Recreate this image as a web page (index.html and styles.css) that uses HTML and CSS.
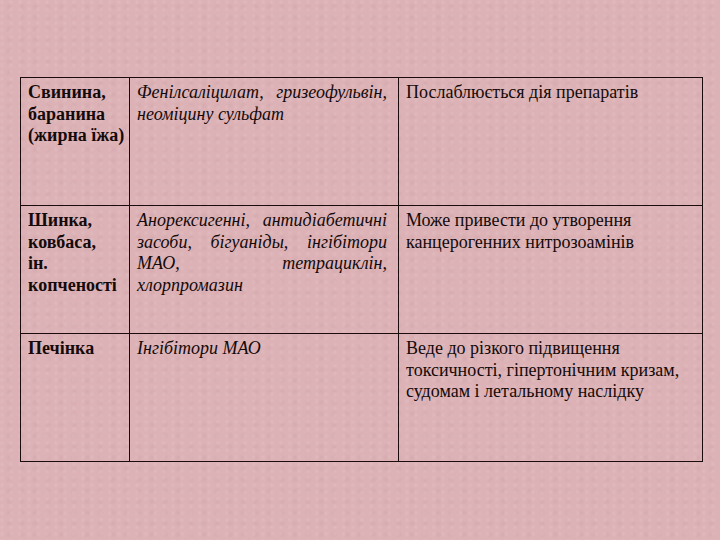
FILE: index.html
```html
<!DOCTYPE html>
<html lang="uk">
<head>
<meta charset="utf-8">
<title>Взаємодія їжі та ліків</title>
<link rel="stylesheet" href="styles.css">
</head>
<body>
<div class="page">
  <table class="grid">
    <colgroup>
      <col class="c-food">
      <col class="c-drug">
      <col class="c-effect">
    </colgroup>
    <tr class="row">
      <td class="food">
        <span class="line">Свинина,</span>
        <span class="line">баранина</span>
        <span class="line">(жирна їжа)</span>
      </td>
      <td class="drug">
        <span class="ln">Фенілсаліцилат, гризеофульвін,</span>
        <span class="ln last">неоміцину сульфат</span>
      </td>
      <td class="effect">Послаблюється дія препаратів</td>
    </tr>
    <tr class="row">
      <td class="food">
        <span class="line">Шинка,</span>
        <span class="line">ковбаса,</span>
        <span class="line">ін.</span>
        <span class="line">копченості</span>
      </td>
      <td class="drug">
        <span class="ln">Анорексигенні, антидіабетичні</span>
        <span class="ln">засоби, бігуаніды, інгібітори</span>
        <span class="ln">МАО, тетрациклін,</span>
        <span class="ln last">хлорпромазин</span>
      </td>
      <td class="effect">Може привести до утворення канцерогенних нитрозоамінів</td>
    </tr>
    <tr class="row">
      <td class="food"><span class="line">Печінка</span></td>
      <td class="drug"><span class="ln last">Інгібітори МАО</span></td>
      <td class="effect">Веде до різкого підвищення токсичності, гіпертонічним кризам, судомам і летальному наслідку</td>
    </tr>
  </table>
</div>
</body>
</html>
```
FILE: styles.css
```css
html, body {
  margin: 0;
  padding: 0;
}
body {
  width: 720px;
  height: 540px;
  overflow: hidden;
  background-color: #dcb2b6;
  background-image:
    radial-gradient(circle at 20% 30%, rgba(255,255,255,0.10) 0, rgba(255,255,255,0) 3px),
    radial-gradient(circle at 70% 60%, rgba(150,90,100,0.08) 0, rgba(150,90,100,0) 4px);
  background-size: 9px 7px, 13px 11px;
  font-family: "Liberation Serif", "Tinos", "DejaVu Serif", serif;
  color: #140a0a;
}
.page {
  padding: 77px 0 0 20px;
}
.grid {
  border-collapse: collapse;
  table-layout: fixed;
  width: 682px;
  font-family: "Liberation Serif", "Tinos", "DejaVu Serif", serif;
  font-size: 18px;
  line-height: 21.5px;
}
.c-food { width: 109px; }
.c-drug { width: 269px; }
.c-effect { width: 304px; }
.row { height: 128px; }
.grid td {
  border: 1px solid #1a0c0c;
  vertical-align: top;
  padding: 4px 6px 4px 7px;
}
.food {
  font-weight: bold;
}
.line {
  display: block;
  white-space: nowrap;
}
.drug {
  font-style: italic;
}
.grid td.drug {
  padding-right: 11px;
}
.ln {
  display: block;
  text-align: justify;
  text-align-last: justify;
}
.ln.last {
  text-align-last: left;
}
.effect {
  text-align: left;
}
```
